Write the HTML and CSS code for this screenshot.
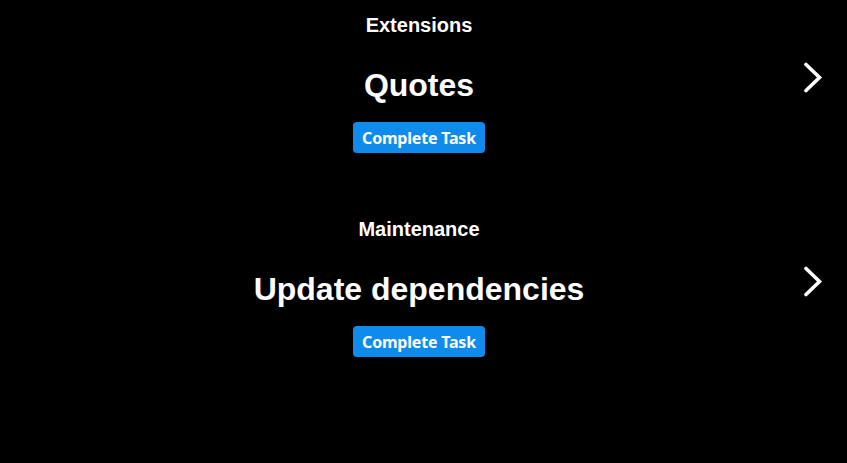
FILE: index.html
```html
<!DOCTYPE html>
<html lang="en">
<head>
<meta charset="utf-8">
<title>Tasks</title>
<link rel="stylesheet" href="styles.css">
</head>
<body>
<main class="list">
  <section class="task">
    <div class="task-body">
      <h2 class="category">Extensions</h2>
      <h1 class="title">Quotes</h1>
      <button class="btn" type="button">Complete Task</button>
    </div>
    <svg class="chevron" width="20" height="32" viewBox="0 0 20 32" aria-hidden="true">
      <path d="M3 2.5 L16.5 15.5 L3 28.5" fill="none" stroke="#fff" stroke-width="3.6" stroke-linecap="round" stroke-linejoin="miter"/>
    </svg>
  </section>
  <section class="task">
    <div class="task-body">
      <h2 class="category">Maintenance</h2>
      <h1 class="title">Update dependencies</h1>
      <button class="btn" type="button">Complete Task</button>
    </div>
    <svg class="chevron" width="20" height="32" viewBox="0 0 20 32" aria-hidden="true">
      <path d="M3 2.5 L16.5 15.5 L3 28.5" fill="none" stroke="#fff" stroke-width="3.6" stroke-linecap="round" stroke-linejoin="miter"/>
    </svg>
  </section>
</main>
</body>
</html>
```

FILE: styles.css
```css
html, body {
  margin: 0;
  padding: 0;
  background: #000;
  color: #fff;
  font-family: "Liberation Sans", Arial, sans-serif;
}

.list {
  display: flex;
  flex-direction: column;
  gap: 49px;
}

.task {
  display: flex;
  align-items: center;
  height: 155px;
  padding-right: 24px;
}

.task-body {
  flex: 1;
  display: flex;
  flex-direction: column;
  align-items: center;
  padding-top: 14px;
  align-self: stretch;
  padding-left: 35px;
}

.category {
  margin: 0;
  font-size: 20px;
  line-height: 23px;
  font-weight: 700;
}

.title {
  margin: 30px 0 0;
  font-size: 32px;
  line-height: 37px;
  font-weight: 700;
}

.btn {
  margin-top: 18px;
  height: 31px;
  padding: 0 9px;
  border: none;
  border-radius: 4px;
  background: #0f8ceb;
  color: #fff;
  font-family: "Noto Sans", "Open Sans", sans-serif;
  font-weight: 700;
  font-size: 16px;
  letter-spacing: -0.2px;
  cursor: pointer;
}

.chevron {
  display: block;
  flex: none;
}
```
